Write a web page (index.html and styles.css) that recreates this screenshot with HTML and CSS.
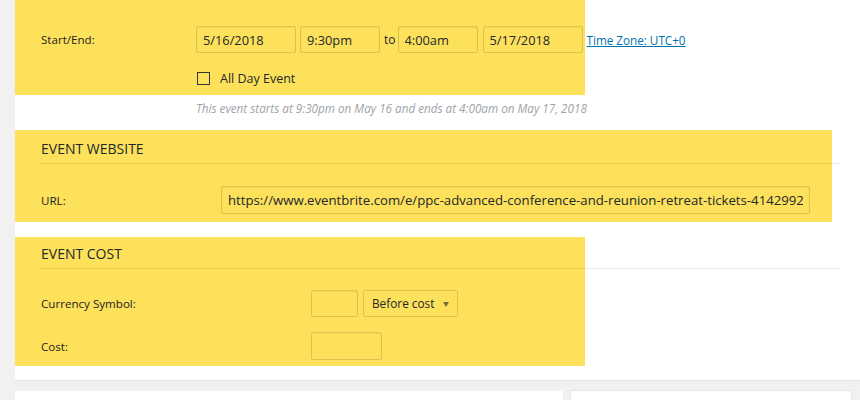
FILE: index.html
```html
<!DOCTYPE html>
<html lang="en">
<head>
  <meta charset="UTF-8">
  <meta name="viewport" content="width=device-width, initial-scale=1.0">
  <title>Event Details</title>
  <link rel="stylesheet" href="styles.css">
</head>
<body>
  <div class="page">
    <div class="postbox">

      <!-- Data e hora -->
      <div class="section hl-short sec-time">
        <div class="row">
          <span class="label label-time">Start/End:</span>
          <div class="fields">
            <input class="field date" type="text" value="5/16/2018">
            <input class="field time" type="text" value="9:30pm">
            <span class="to">to</span>
            <input class="field time" type="text" value="4:00am">
            <input class="field date" type="text" value="5/17/2018">
            <a class="tz" href="#">Time Zone: UTC+0</a>
          </div>
        </div>
        <div class="row allday">
          <span class="label label-time"></span>
          <label class="check"><span class="box"></span>All Day Event</label>
        </div>
      </div>
      <p class="note">This event starts at 9:30pm on May 16 and ends at 4:00am on May 17, 2018</p>

      <!-- Website -->
      <div class="section hl-long sec-web">
        <h3 class="heading">EVENT WEBSITE</h3>
        <div class="row url-row">
          <span class="label label-url">URL:</span>
          <input class="field url" type="text" value="https://www.eventbrite.com/e/ppc-advanced-conference-and-reunion-retreat-tickets-41429921234">
        </div>
      </div>

      <!-- Custo -->
      <div class="section hl-short sec-cost">
        <h3 class="heading">EVENT COST</h3>
        <div class="row currency-row">
          <span class="label label-cost">Currency Symbol:</span>
          <input class="field symbol" type="text" value="">
          <div class="select">Before cost</div>
        </div>
        <div class="row cost-row">
          <span class="label label-cost">Cost:</span>
          <input class="field cost" type="text" value="">
        </div>
      </div>
    </div>

    <div class="lower">
      <div class="lower-box lower-left"></div>
      <div class="lower-box lower-right"></div>
    </div>
  </div>
</body>
</html>
```

FILE: styles.css
```css
/* Base */
body {
  margin: 0;
  padding: 0;
  background-color: #f1f1f1;
  font-family: "Open Sans", "Noto Sans", sans-serif;
  color: #23282d;
}

.page {
  padding-left: 15px;
}

.postbox {
  background-color: #fff;
  box-shadow: 0 1px 1px rgba(0,0,0,0.06);
  padding-bottom: 14px;
}

/* Marca-texto amarelo */
.hl-short {
  background: linear-gradient(90deg, #fde15a 570px, transparent 570px);
}

.hl-long {
  background: linear-gradient(90deg, #fde15a 817px, transparent 817px);
}

.section {
  padding-left: 26px;
}

.row {
  display: flex;
  align-items: center;
  white-space: nowrap;
}

.label {
  font-size: 11.6px;
  color: #1d2125;
  flex-shrink: 0;
}

.label-time { width: 155px; }
.label-url { width: 180px; }
.label-cost { width: 270px; }

.field {
  box-sizing: border-box;
  height: 27px;
  margin: 0;
  padding: 0 6px;
  font-family: "Open Sans", "Noto Sans", sans-serif;
  font-size: 12.8px;
  color: #23282d;
  background: transparent;
  border: 1px solid rgba(0,0,0,0.13);
  border-radius: 2px;
  box-shadow: inset 0 1px 2px rgba(0,0,0,0.04);
  outline: none;
}

/* Start/End */
.sec-time {
  padding-top: 26px;
  padding-bottom: 5px;
}

.fields {
  display: flex;
  align-items: center;
}

.date { width: 100px; }
.time { width: 80px; margin-left: 4px; }
.date:last-of-type { margin-left: 5px; }

.to {
  font-size: 12px;
  margin-left: 4px;
}

.to + .time {
  margin-left: 2px;
}

.tz {
  margin-left: 4px;
  font-size: 11.7px;
  color: #0073aa;
}

.allday {
  height: 24px;
  margin-top: 13px;
}

.check {
  display: flex;
  align-items: center;
  font-size: 12.5px;
}

.check .box {
  box-sizing: border-box;
  width: 13px;
  height: 13px;
  margin-left: 1px;
  margin-right: 10px;
  border: 1px solid #333;
}

.note {
  margin: 5px 0 14px 181px;
  line-height: 16px;
  font-size: 11.7px;
  font-style: italic;
  color: #9ea3a8;
}

/* Cabeçalhos */
.heading {
  width: 798px;
  margin: 0 0 0 -1px;
  padding: 10px 0 5px 1px;
  line-height: 18px;
  font-size: 14px;
  font-weight: 400;
  border-bottom: 1px solid rgba(0,0,0,0.08);
}

/* Website */
.sec-web {
  padding-bottom: 8px;
}

.url-row {
  margin-top: 22px;
}

.url {
  width: 589px;
  height: 28px;
  font-size: 13.2px;
}

/* Custo */
.sec-cost {
  margin-top: 15px;
  padding-bottom: 6px;
}

.sec-cost .heading {
  padding-top: 8px;
}

.currency-row {
  margin-top: 21px;
}

.symbol { width: 47px; }

.select {
  position: relative;
  box-sizing: border-box;
  width: 95px;
  height: 27px;
  margin-left: 5px;
  padding: 0 8px;
  line-height: 25px;
  font-size: 11.8px;
  border: 1px solid rgba(0,0,0,0.13);
  border-radius: 2px;
}

.select::after {
  content: "";
  position: absolute;
  right: 8px;
  top: 11px;
  border-left: 3px solid transparent;
  border-right: 3px solid transparent;
  border-top: 5px solid #7a6e3a;
}

.cost-row {
  margin-top: 15px;
}

.cost { width: 71px; height: 28px; }

/* Caixas inferiores */
.lower {
  display: flex;
  margin-top: 11px;
}

.lower-box {
  height: 30px;
  background-color: #fff;
}

.lower-left {
  width: 548px;
}

.lower-right {
  width: 280px;
  margin-left: 7px;
  margin-top: -1px;
  border: 1px solid #e5e5e5;
}
```
